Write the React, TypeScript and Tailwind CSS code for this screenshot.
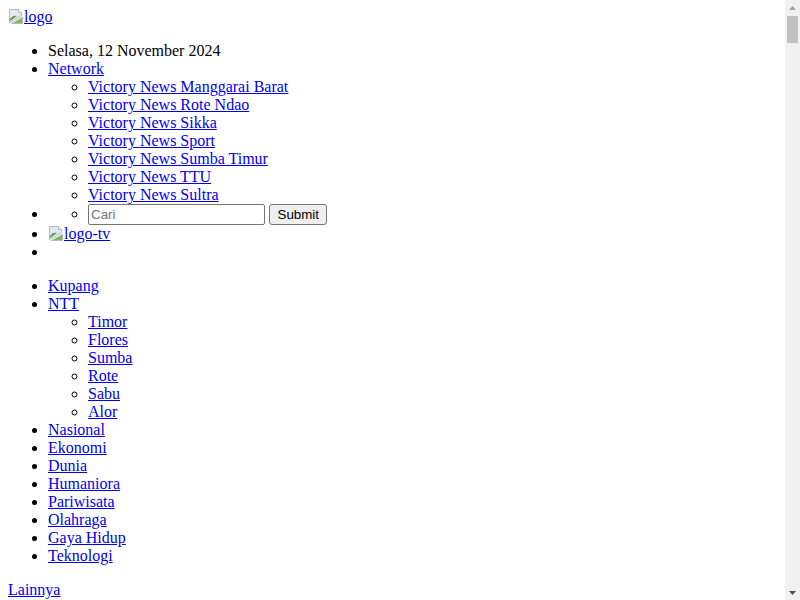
import type { JSX } from "react/jsx-runtime";

const network: string[] = [
    "Victory News Manggarai Barat",
    "Victory News Rote Ndao",
    "Victory News Sikka",
    "Victory News Sport",
    "Victory News Sumba Timur",
    "Victory News TTU",
    "Victory News Sultra",
];

const ntt: string[] = ["Timor", "Flores", "Sumba", "Rote", "Sabu", "Alor"];

const sections: string[] = [
    "Nasional",
    "Ekonomi",
    "Dunia",
    "Humaniora",
    "Pariwisata",
    "Olahraga",
    "Gaya Hidup",
    "Teknologi",
];

// broken image placeholder, like the browser draws for a missing src
function BrokenImage(): JSX.Element {
    return (
        <svg width="16" height="16" viewBox="0 0 16 16" className="inline-block align-[-2px]">
            <path d="M1.5 1.5h9l3 3v3l-12 7z" fill="#dfeaf5" stroke="#b9b9b9" />
            <path d="M2 11c2-3 4-4 7-3l-7 5z" fill="#5da23a" />
            <path d="M3.5 16 14.5 9.5v6z" fill="#7cb75a" />
            <path d="M3.5 15.5 14.5 9v6.5z" fill="none" stroke="#b9b9b9" />
            <path d="M10.5 1.5v3h3" fill="#f4f4f4" stroke="#b9b9b9" />
        </svg>
    );
}

function Link({children}: {children: React.ReactNode}): JSX.Element {
    return <a href="#" className="text-[#0000ee] underline">{children}</a>;
}

// window scrollbar (page is much taller than the viewport)
function Scrollbar(): JSX.Element {
    return (
        <div className="w-[15px] shrink-0 bg-[#f1f1f1] flex flex-col items-center">
            <div className="h-[15px] flex items-center justify-center">
                <svg width="7" height="4" viewBox="0 0 7 4"><path d="M3.5 0 7 4H0z" fill="#a3a3a3"/></svg>
            </div>
            <div className="w-[11px] h-[27px] mt-[1px] bg-[#c1c1c1]"/>
            <div className="flex-1"/>
            <div className="h-[15px] flex items-center justify-center">
                <svg width="7" height="4" viewBox="0 0 7 4"><path d="M0 0h7L3.5 4z" fill="#505050"/></svg>
            </div>
        </div>
    );
}

function App(): JSX.Element {
    return (
        <div className="h-screen flex overflow-hidden bg-white text-black text-base leading-[normal] font-['Liberation_Serif','Times_New_Roman',serif]">
            <div className="flex-1 min-w-0 overflow-hidden p-2">
                <div>
                    <Link><BrokenImage/>logo</Link>
                </div>

                <ul className="list-disc pl-10 my-4">
                    <li>Selasa, 12 November 2024</li>
                    <li>
                        <Link>Network</Link>
                        <ul className="list-[circle] pl-10">
                            {network.map((n) => (
                                <li key={n}><Link>{n}</Link></li>
                            ))}
                        </ul>
                    </li>
                    <li>
                        <ul className="list-[circle] pl-10">
                            <li>
                                <form className="inline" onSubmit={(e) => e.preventDefault()}>
                                    <input
                                        type="text"
                                        placeholder="Cari"
                                        className="w-[177px] h-[21px] px-[2px] border border-[#767676] rounded-[2px] text-[13.33px] font-['Liberation_Sans',Arial,sans-serif] placeholder:text-[#757575] align-baseline"
                                    />{" "}
                                    <button
                                        type="submit"
                                        className="h-[21px] px-[7.5px] border border-[#767676] rounded-[3px] bg-[#efefef] text-[13.33px] font-['Liberation_Sans',Arial,sans-serif] align-baseline"
                                    >
                                        Submit
                                    </button>
                                </form>
                            </li>
                        </ul>
                    </li>
                    <li>
                        <Link><BrokenImage/>logo-tv</Link>
                    </li>
                    <li>&nbsp;</li>
                </ul>

                <ul className="list-disc pl-10 my-4">
                    <li><Link>Kupang</Link></li>
                    <li>
                        <Link>NTT</Link>
                        <ul className="list-[circle] pl-10">
                            {ntt.map((n) => (
                                <li key={n}><Link>{n}</Link></li>
                            ))}
                        </ul>
                    </li>
                    {sections.map((s) => (
                        <li key={s}><Link>{s}</Link></li>
                    ))}
                </ul>

                <div>
                    <Link>Lainnya</Link>
                </div>
            </div>
            <Scrollbar/>
        </div>
    );
}

export default App;
